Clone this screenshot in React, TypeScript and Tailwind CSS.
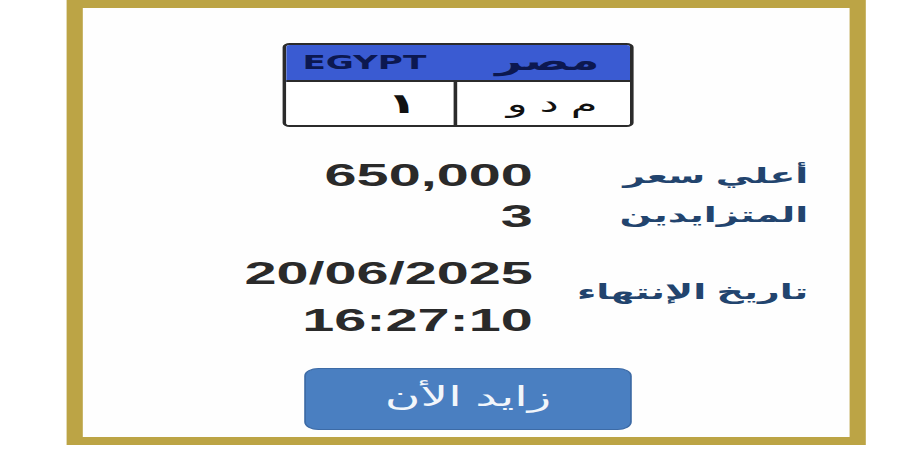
import React from "react";

const latin = { fontFamily: '"Liberation Sans", "DejaVu Sans", Arial, sans-serif' };
const heavy = { fontFamily: '"DejaVu Sans", "Liberation Sans", sans-serif' };

export default function App() {
  return (
    <div className="w-[900px] h-[450px] bg-white overflow-hidden" style={latin}>
      <div className="w-[500px] h-[450px] origin-top-left scale-x-[1.8] pl-[37px]">
        <div className="w-[444px] h-[445px] border-x-[9px] border-y-8 border-[#bca445] bg-[#fefefe] flex flex-col">
          {/* Plate */}
          <div className="ml-[111px] mt-[35px] w-[195px] h-[84px] border-2 border-[#2b2b2b] rounded-[4px] overflow-hidden flex flex-col">
            <div className="h-[37px] bg-[#3a5bd2] border-b-2 border-[#2b2b2b] flex items-center justify-between pl-[9px] pr-[17px]">
              <span className="text-[19px] font-bold text-[#0c1850] leading-none" style={heavy}>EGYPT</span>
              <span dir="rtl" className="text-[26px] font-bold text-[#0c1850] leading-none mb-[4px]">مصر</span>
            </div>
            <div className="flex-1 flex bg-white">
              <div className="w-[95px] border-r-2 border-[#2b2b2b] flex items-center justify-end pr-[20px]">
                <span className="text-[28px] font-bold text-[#111] leading-none">١</span>
              </div>
              <div className="flex-1 flex items-center justify-end pr-[18px]">
                <span dir="rtl" className="text-[24px] text-[#111] leading-none">م د و</span>
              </div>
            </div>
          </div>

          {/* Info rows */}
          <div className="mt-[28px] grid grid-cols-[250px_153px] text-[#2a2a2a]">
            <div className="text-right text-[32px] font-bold leading-[41px]">650,000</div>
            <div dir="rtl" className="text-right text-[21px] font-bold text-[#22446e] leading-[41px]">أعلي سعر</div>

            <div className="text-right text-[32px] font-bold leading-[41px]">3</div>
            <div dir="rtl" className="text-right text-[21px] font-bold text-[#22446e] leading-[37px]">المتزايدين</div>

            <div className="mt-[13px] text-right text-[32px] font-bold leading-[47px]">
              <div>20/06/2025</div>
              <div>16:27:10</div>
            </div>
            <div dir="rtl" className="mt-[13px] flex items-center pb-[10px] text-[21px] font-bold text-[#22446e]">تاريخ الإنتهاء</div>
          </div>

          {/* Button */}
          <div className="ml-[123px] mt-[24px] w-[182px] h-[62px] rounded-[8px] bg-[#4a7fc1] border border-[#3d6ba6] flex items-center justify-center">
            <span dir="rtl" className="text-[27px] text-[#f2f6fb] leading-none mb-[4px]">زايد الأن</span>
          </div>
        </div>
      </div>
    </div>
  );
}
